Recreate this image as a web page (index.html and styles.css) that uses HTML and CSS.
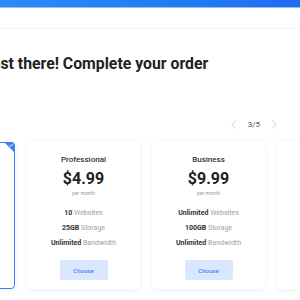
FILE: index.html
```html
<!DOCTYPE html>
<html lang="en">
<head>
  <meta charset="UTF-8">
  <meta name="viewport" content="width=device-width, initial-scale=1.0">
  <title>Complete your order</title>
  <link rel="stylesheet" href="styles.css">
</head>

<body>
  <div class="topbar"></div>
  <div class="header"></div>

  <div class="page">
    <h1>Almost there! Complete your order</h1>

    <div class="pager">
      <svg class="arrow" width="5" height="9" viewBox="0 0 5 9"><path d="M4.5 0.5 L1 4.5 L4.5 8.5" fill="none" stroke="#c9c9c9" stroke-width="0.9"/></svg>
      <span class="count">3/5</span>
      <svg class="arrow" width="5" height="9" viewBox="0 0 5 9"><path d="M0.5 0.5 L4 4.5 L0.5 8.5" fill="none" stroke="#c9c9c9" stroke-width="0.9"/></svg>
    </div>

    <div class="track">
      <div class="plan selected">
        <span class="corner">
          <svg width="5" height="4" viewBox="0 0 5 4"><path d="M0.5 2 L2 3.3 L4.5 0.6" fill="none" stroke="#fff" stroke-width="0.9"/></svg>
        </span>
        <div class="plan-name">Starter</div>
        <div class="price">$2.99</div>
        <div class="period">per month</div>
        <ul class="features">
          <li><b>1</b> Website</li>
          <li><b>10GB</b> Storage</li>
          <li><b>Unlimited</b> Bandwidth</li>
        </ul>
        <button class="choose">Choose</button>
      </div>

      <div class="plan">
        <div class="plan-name">Professional</div>
        <div class="price">$4.99</div>
        <div class="period">per month</div>
        <ul class="features">
          <li><b>10</b> Websites</li>
          <li><b>25GB</b> Storage</li>
          <li><b>Unlimited</b> Bandwidth</li>
        </ul>
        <button class="choose">Choose</button>
      </div>

      <div class="plan">
        <div class="plan-name">Business</div>
        <div class="price">$9.99</div>
        <div class="period">per month</div>
        <ul class="features">
          <li><b>Unlimited</b> Websites</li>
          <li><b>100GB</b> Storage</li>
          <li><b>Unlimited</b> Bandwidth</li>
        </ul>
        <button class="choose">Choose</button>
      </div>

      <div class="plan">
        <div class="plan-name">Enterprise</div>
        <div class="price">$19.99</div>
        <div class="period">per month</div>
        <ul class="features">
          <li><b>Unlimited</b> Websites</li>
          <li><b>250GB</b> Storage</li>
          <li><b>Unlimited</b> Bandwidth</li>
        </ul>
        <button class="choose">Choose</button>
      </div>
    </div>
  </div>
</body>
</html>
```

FILE: styles.css
```css
body {
  margin: 0;
  font-family: Roboto, "Liberation Sans", sans-serif;
  background-color: #fff;
  color: #222;
  width: 300px;
  height: 300px;
  overflow: hidden;
}

.topbar {
  height: 7px;
  background: linear-gradient(90deg, #2a8cf7, #1e6ef0);
  border-bottom: 1px solid #8fc0fb;
}

.header {
  height: 20px;
  border-bottom: 1px solid #f3f3f3;
}

.page {
  margin-left: -37px;
  width: 337px;
}

h1 {
  font-size: 15.8px;
  font-weight: 700;
  line-height: 19px;
  margin: 25px 0 0 0;
  color: #222;
  white-space: nowrap;
}

.pager {
  display: flex;
  justify-content: flex-end;
  align-items: center;
  gap: 12px;
  height: 10px;
  margin-top: 46px;
  padding-right: 23px;
}

.count {
  font-size: 8px;
  color: #555;
}

.track {
  display: flex;
  gap: 12px;
  margin-top: 13px;
  margin-left: -61px;
}

.plan {
  position: relative;
  flex: 0 0 113px;
  box-sizing: border-box;
  height: 147px;
  padding-top: 12px;
  background-color: #fff;
  border: 1px solid transparent;
  border-radius: 4px;
  box-shadow: 0 1px 6px rgba(0, 0, 0, 0.07);
  text-align: center;
}

.plan.selected {
  border-color: #3c7ff5;
}

.corner {
  position: absolute;
  top: -1px;
  right: -1px;
  width: 0;
  height: 0;
  border-top: 11px solid #3c7ff5;
  border-left: 11px solid transparent;
  border-top-right-radius: 4px;
}

.corner svg {
  position: absolute;
  top: -10px;
  right: 1px;
}

.plan-name {
  font-size: 8px;
  font-weight: 500;
  line-height: 10px;
  color: #333;
}

.price {
  font-size: 16px;
  font-weight: 700;
  line-height: 20px;
  margin-top: 4px;
  color: #222;
}

.period {
  font-size: 5px;
  line-height: 6px;
  margin-top: 1px;
  color: #9a9a9a;
}

.features {
  list-style: none;
  margin: 10px 0 0 0;
  padding: 0;
  font-size: 7px;
  line-height: 15px;
  color: #a0a0a0;
}

.features b {
  color: #333;
}

.choose {
  margin-top: 9px;
  width: 48px;
  height: 20px;
  border: none;
  border-radius: 2px;
  background-color: #dbe7fe;
  color: #3a7ef2;
  font-family: inherit;
  font-size: 6px;
  font-weight: 500;
  cursor: pointer;
}
```
